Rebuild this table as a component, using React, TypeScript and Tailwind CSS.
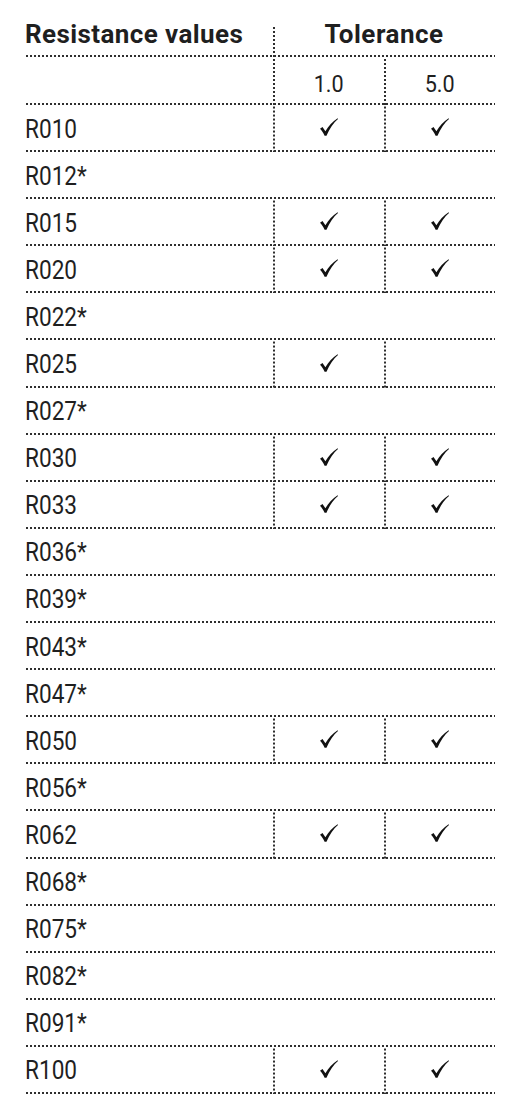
import React from "react";

const rows: { name: string; a: boolean; b: boolean; grid: boolean }[] = [
  { name: "R010", a: true, b: true, grid: true },
  { name: "R012*", a: false, b: false, grid: false },
  { name: "R015", a: true, b: true, grid: true },
  { name: "R020", a: true, b: true, grid: true },
  { name: "R022*", a: false, b: false, grid: false },
  { name: "R025", a: true, b: false, grid: true },
  { name: "R027*", a: false, b: false, grid: false },
  { name: "R030", a: true, b: true, grid: true },
  { name: "R033", a: true, b: true, grid: true },
  { name: "R036*", a: false, b: false, grid: false },
  { name: "R039*", a: false, b: false, grid: false },
  { name: "R043*", a: false, b: false, grid: false },
  { name: "R047*", a: false, b: false, grid: false },
  { name: "R050", a: true, b: true, grid: true },
  { name: "R056*", a: false, b: false, grid: false },
  { name: "R062", a: true, b: true, grid: true },
  { name: "R068*", a: false, b: false, grid: false },
  { name: "R075*", a: false, b: false, grid: false },
  { name: "R082*", a: false, b: false, grid: false },
  { name: "R091*", a: false, b: false, grid: false },
  { name: "R100", a: true, b: true, grid: true },
];

const hLine =
  "bg-[linear-gradient(to_right,#2e2e2e_2px,transparent_2px)] bg-[length:4px_2px] bg-repeat-x bg-bottom";
const vLine =
  "bg-[linear-gradient(to_bottom,#2e2e2e_2px,transparent_2px)] bg-[length:2px_4px] bg-repeat-y bg-left";

function Check() {
  return (
    <svg width="18" height="18" viewBox="0 0 18 18" aria-hidden="true">
      <path
        d="M0 10.8 L2.5 9 L5.4 13.2 C8.5 8 12.5 3.4 17.6 0.2 L18 0.9 C13.3 4.9 9.5 10.4 6.5 17.8 L4.6 17.8 C3.4 15.2 1.9 12.8 0 10.8 Z"
        fill="#111"
      />
    </svg>
  );
}

export default function App() {
  return (
    <div
      className="bg-white w-[520px] h-[1120px] pl-[25px] text-[#1f1f1f]"
      style={{ fontFamily: 'Roboto, "Liberation Sans", sans-serif' }}
    >
      <div className="w-[470px]">
        <div className={`flex h-[57px] ${hLine}`}>
          <div className="w-[248px] flex items-end pb-[10px] font-bold text-[26px] leading-none tracking-[0.4px] whitespace-nowrap">
            Resistance values
          </div>
          <div className={`flex-1 mt-[25px] ${vLine} flex items-end justify-center pb-[10px]`}>
            <span className="font-bold text-[26px] leading-none tracking-[0.5px] whitespace-nowrap">Tolerance</span>
          </div>
        </div>
        <div className={`flex h-[48px] ${hLine}`}>
          <div className="w-[248px]" />
          <div className={`w-[111px] ${vLine} flex items-center justify-center pt-[6px]`}>
            <span className="inline-block text-[24px] leading-none font-normal scale-x-[0.9]">1.0</span>
          </div>
          <div className={`w-[111px] ${vLine} flex items-center justify-center pt-[6px]`}>
            <span className="inline-block text-[24px] leading-none font-normal scale-x-[0.9]">5.0</span>
          </div>
        </div>
        {rows.map((r) => (
          <div key={r.name} className={`flex h-[47.1px] ${hLine}`}>
            <div className="w-[248px] flex items-center">
              <span className="inline-block origin-left scale-x-[0.87] text-[26px] leading-none font-normal whitespace-nowrap">
                {r.name}
              </span>
            </div>
            {r.grid && (
              <>
                <div className={`w-[111px] ${vLine} flex items-center justify-center pb-[3px]`}>{r.a && <Check />}</div>
                <div className={`w-[111px] ${vLine} flex items-center justify-center pb-[3px]`}>{r.b && <Check />}</div>
              </>
            )}
          </div>
        ))}
      </div>
    </div>
  );
}
